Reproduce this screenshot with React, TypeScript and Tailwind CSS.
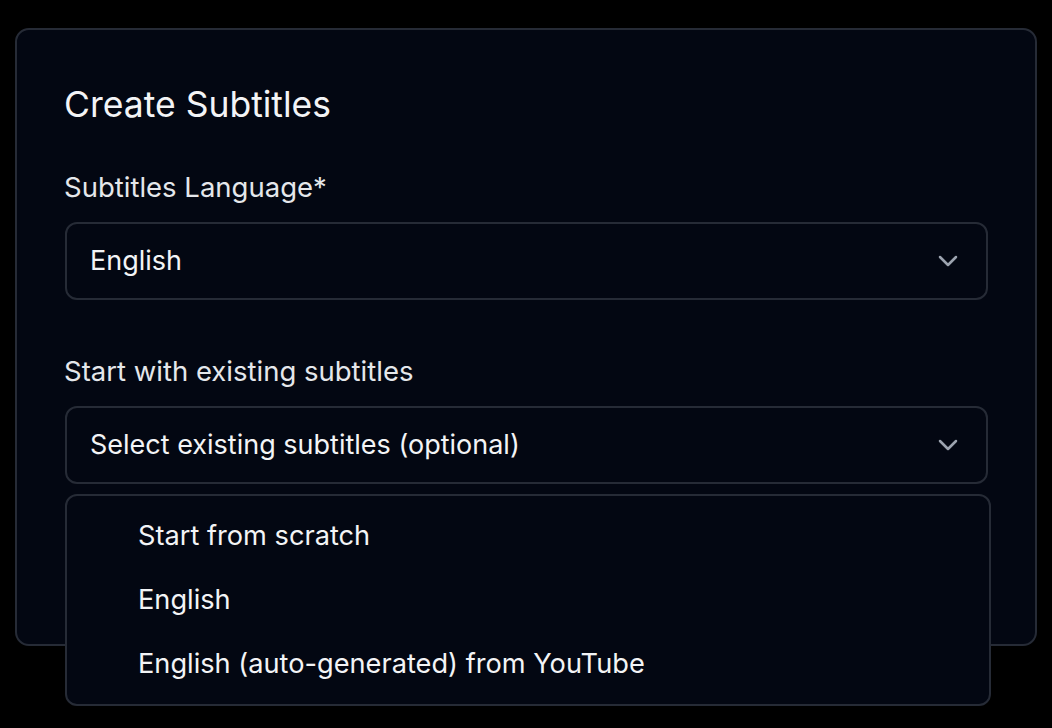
import { ChevronDown } from 'lucide-react';

const OPTIONS = ['Start from scratch', 'English', 'English (auto-generated) from YouTube'];

function SelectBox({ value }: { value: string }) {
  return (
    <div className="flex h-[78px] items-center justify-between rounded-[12px] border-2 border-[#262b36] bg-[#030712] pl-[23px] pr-[22px]">
      <span className="text-[27px] text-[#f3f4f6]">{value}</span>
      <ChevronDown className="h-[32px] w-[32px] text-[#9ca3af]" strokeWidth={1.9} aria-hidden />
    </div>
  );
}

export default function App() {
  return (
    <div
      className="h-[728px] w-[1052px] overflow-hidden bg-black pt-[28px] pl-[15px]"
      style={{ fontFamily: 'Inter, "Noto Sans", sans-serif' }}
    >
      <div className="h-[618px] w-[1022px] rounded-[14px] border-2 border-[#262b36] bg-[#030712] px-[47px] pt-[55px]">
        <h1 className="text-[35.5px] leading-[40px] font-normal text-[#f3f4f6]">Create Subtitles</h1>

        <p className="mt-[44px] text-[27.5px] leading-[36px] text-[#e5e7eb]">Subtitles Language*</p>
        <div className="mt-[17px] pl-px">
          <SelectBox value="English" />
        </div>

        <p className="mt-[53px] text-[27.5px] leading-[36px] text-[#e5e7eb]">Start with existing subtitles</p>
        <div className="relative mt-[17px] pl-px">
          <SelectBox value="Select existing subtitles (optional)" />

          {/* open listbox */}
          <ul className="absolute left-px top-full mt-[10px] w-[926px] rounded-[12px] border-2 border-[#262b36] bg-[#030712] py-[8px]">
            {OPTIONS.map((o) => (
              <li key={o} className="flex h-[64px] items-center pl-[71px] text-[27.2px] text-[#f3f4f6]">
                {o}
              </li>
            ))}
          </ul>
        </div>
      </div>
    </div>
  );
}
